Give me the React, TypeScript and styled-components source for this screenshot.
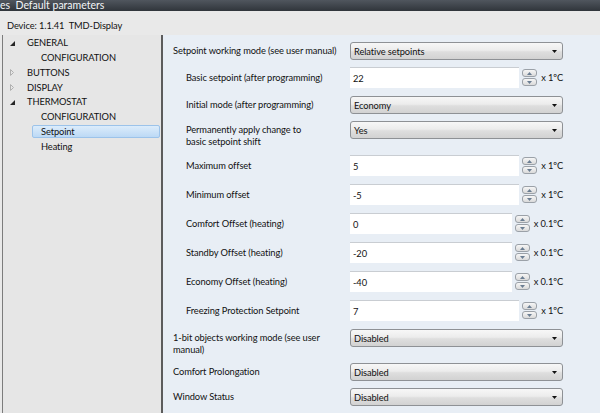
import styled, { createGlobalStyle } from 'styled-components';

const GlobalStyle = createGlobalStyle`
  html, body {
    margin: 0;
    padding: 0;
  }
  body {
    font-family: Lato, 'Open Sans', sans-serif;
  }
`;

const Window = styled.div`
  width: 600px;
  height: 413px;
  overflow: hidden;
  display: flex;
  flex-direction: column;
  background: #e9e9e9;
  color: #111111;
  font-family: Lato, 'Open Sans', sans-serif;
  font-size: 9.3px;
  letter-spacing: -0.1px;
`;

const TitleBar = styled.div`
  flex: none;
  height: 11px;
  background: linear-gradient(#50565e, #30353b);
  color: #f3f5f7;
  font-size: 10.5px;
  letter-spacing: 0;
  line-height: 10px;
  white-space: pre;
  overflow: hidden;
`;

const Header = styled.div`
  flex: none;
  height: 24px;
  box-sizing: border-box;
  padding: 9px 0 0 7px;
  line-height: 12px;
  white-space: pre;
`;

const Body = styled.div`
  flex: 1;
  display: flex;
  padding-left: 2px;
  min-height: 0;
`;

const Tree = styled.div`
  width: 158px;
  flex: none;
  border-left: 1px solid #7c7c7c;
  background: #e6e6e6;
  padding-top: 1px;
`;

const TreeItem = styled.div<{ $level: number }>`
  height: 14.75px;
  display: flex;
  align-items: center;
  padding-left: ${(p) => (p.$level === 0 ? 4 : 29)}px;
  line-height: 12px;
`;

const Toggle = styled.span`
  width: 10px;
  margin-right: 1px;
  display: flex;
  align-items: center;
  justify-content: center;
`;

const ItemText = styled.span<{ $selected?: boolean }>`
  display: flex;
  align-items: center;
  height: 13px;
  box-sizing: border-box;
  padding: 0 ${(p) => (p.$selected ? 8 : 9)}px;
  flex: ${(p) => (p.$selected ? 1 : 'none')};
  margin-right: 1px;
  border: ${(p) => (p.$selected ? '1px solid #9cc3ea' : 'none')};
  border-radius: 2px;
  background: ${(p) => (p.$selected ? 'linear-gradient(#dcecfb, #bcd9f5)' : 'transparent')};
`;

const Panel = styled.div`
  flex: 1;
  border-left: 2px solid #5c5c5c;
  background: #e8eef5;
  padding-top: 3px;
`;

const Row = styled.div<{ $kind: 'select' | 'number' }>`
  display: grid;
  grid-template-columns: 187px 213px;
  align-items: start;
  padding: ${(p) => (p.$kind === 'select' ? '4px 0 3px' : '4px 0')};
`;

const Label = styled.div<{ $indent?: boolean; $kind: 'select' | 'number' }>`
  padding-left: ${(p) => (p.$indent ? 23 : 10)}px;
  padding-top: ${(p) => (p.$kind === 'select' ? 3 : 4.5)}px;
  line-height: 12px;
  white-space: pre-line;
`;

const Select = styled.div`
  height: 18px;
  box-sizing: border-box;
  display: flex;
  align-items: center;
  justify-content: space-between;
  padding: 0 5px 0 3px;
  border: 1px solid #8e9195;
  border-radius: 3px;
  background: linear-gradient(#f7f7f7, #ececec 45%, #dedede 55%, #d2d2d2);
`;

const NumberGroup = styled.div`
  height: 21px;
  display: flex;
  align-items: center;
`;

const NumberBox = styled.div`
  flex: 1;
  height: 21px;
  box-sizing: border-box;
  display: flex;
  align-items: center;
  padding-left: 3px;
  background: #ffffff;
  border-top: 1px solid #c9cdd2;
`;

const Spinner = styled.div`
  width: 15px;
  margin: 0 4px 0 3px;
  display: flex;
  flex-direction: column;
  gap: 1px;
`;

const SpinButton = styled.div`
  height: 8px;
  box-sizing: border-box;
  display: flex;
  align-items: center;
  justify-content: center;
  border: 1px solid #9ba1a8;
  border-radius: 3px;
  background: linear-gradient(#f6f6f6, #dadada);
`;

const Unit = styled.span`
  white-space: nowrap;
`;

const ArrowDown = () => (
  <svg width="5" height="3" viewBox="0 0 5 3">
    <path d="M0 0H5L2.5 3Z" fill="#111" />
  </svg>
);

const SpinArrow = ({ up }: { up?: boolean }) => (
  <svg width="5" height="3" viewBox="0 0 5 3">
    <path d={up ? 'M0 3H5L2.5 0Z' : 'M0 0H5L2.5 3Z'} fill="#6a7d92" />
  </svg>
);

const Expanded = () => (
  <svg width="5" height="5" viewBox="0 0 5 5">
    <path d="M5 0V5H0Z" fill="#262626" />
  </svg>
);

const Collapsed = () => (
  <svg width="4" height="7" viewBox="0 0 4 7">
    <path d="M0.5 0.5L3.5 3.5L0.5 6.5Z" fill="none" stroke="#b0b0b0" strokeWidth="1" />
  </svg>
);

type TreeNode = { text: string; level: number; open?: boolean; selected?: boolean };

const tree: TreeNode[] = [
  { text: 'GENERAL', level: 0, open: true },
  { text: 'CONFIGURATION', level: 1 },
  { text: 'BUTTONS', level: 0, open: false },
  { text: 'DISPLAY', level: 0, open: false },
  { text: 'THERMOSTAT', level: 0, open: true },
  { text: 'CONFIGURATION', level: 1 },
  { text: 'Setpoint', level: 1, selected: true },
  { text: 'Heating', level: 1 },
];

type Param =
  | { kind: 'select'; label: string; value: string; indent?: boolean }
  | { kind: 'number'; label: string; value: string; unit: string; indent?: boolean };

const params: Param[] = [
  { kind: 'select', label: 'Setpoint working mode (see user manual)', value: 'Relative setpoints' },
  { kind: 'number', label: 'Basic setpoint (after programming)', value: '22', unit: 'x 1ºC', indent: true },
  { kind: 'select', label: 'Initial mode (after programming)', value: 'Economy', indent: true },
  { kind: 'select', label: 'Permanently apply change to\nbasic setpoint shift', value: 'Yes', indent: true },
  { kind: 'number', label: 'Maximum offset', value: '5', unit: 'x 1ºC', indent: true },
  { kind: 'number', label: 'Minimum offset', value: '-5', unit: 'x 1ºC', indent: true },
  { kind: 'number', label: 'Comfort Offset (heating)', value: '0', unit: 'x 0.1ºC', indent: true },
  { kind: 'number', label: 'Standby Offset (heating)', value: '-20', unit: 'x 0.1ºC', indent: true },
  { kind: 'number', label: 'Economy Offset (heating)', value: '-40', unit: 'x 0.1ºC', indent: true },
  { kind: 'number', label: 'Freezing Protection Setpoint', value: '7', unit: 'x 1ºC', indent: true },
  { kind: 'select', label: '1-bit objects working mode (see user\nmanual)', value: 'Disabled' },
  { kind: 'select', label: 'Comfort Prolongation', value: 'Disabled' },
  { kind: 'select', label: 'Window Status', value: 'Disabled' },
];

const App = () => {
  return (
    <>
      <GlobalStyle />
      <Window>
        <TitleBar>{'es  Default parameters'}</TitleBar>
        <Header>{'Device: 1.1.41  TMD-Display'}</Header>
        <Body>
          <Tree>
            {tree.map((node, i) => (
              <TreeItem key={i} $level={node.level}>
                {node.level === 0 && (
                  <Toggle>{node.open ? <Expanded /> : <Collapsed />}</Toggle>
                )}
                <ItemText $selected={node.selected}>{node.text}</ItemText>
              </TreeItem>
            ))}
          </Tree>
          <Panel>
            {params.map((p, i) => (
              <Row key={i} $kind={p.kind}>
                <Label $indent={p.indent} $kind={p.kind}>
                  {p.label}
                </Label>
                {p.kind === 'select' ? (
                  <Select>
                    <span>{p.value}</span>
                    <ArrowDown />
                  </Select>
                ) : (
                  <NumberGroup>
                    <NumberBox>{p.value}</NumberBox>
                    <Spinner>
                      <SpinButton>
                        <SpinArrow up />
                      </SpinButton>
                      <SpinButton>
                        <SpinArrow />
                      </SpinButton>
                    </Spinner>
                    <Unit>{p.unit}</Unit>
                  </NumberGroup>
                )}
              </Row>
            ))}
          </Panel>
        </Body>
      </Window>
    </>
  );
};

export default App;
